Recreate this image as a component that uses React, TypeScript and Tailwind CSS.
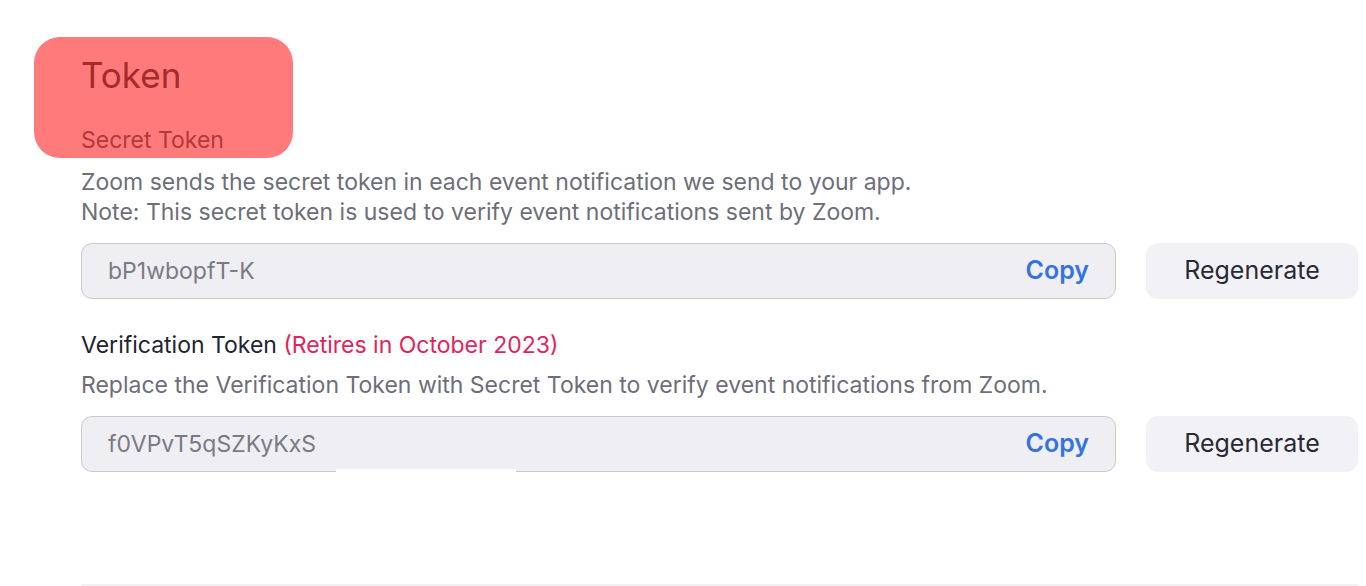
import React from "react";

interface TokenFieldProps {
  value: string;
  masked?: boolean;
}

const TokenField: React.FC<TokenFieldProps> = ({ value, masked }) => {
  return (
    <div className="flex items-center gap-[30px]">
      <div className="relative flex h-[56px] flex-1 items-center justify-between rounded-[11px] border border-[#c9c9d2] bg-[#eeeef3] pl-[26px] pr-[26px]">
        <span className="text-[23px] text-[#7a7a85]">{value}</span>
        <span className="text-[25px] font-semibold text-[#3572e2]">Copy</span>
        {masked && (
          <div className="absolute bottom-[-2px] left-[254px] h-[4px] w-[180px] bg-white" />
        )}
      </div>
      <button className="flex h-[56px] w-[212px] items-center justify-center rounded-[12px] bg-[#f2f2f6] text-[25px] text-[#2a2a36]">
        Regenerate
      </button>
    </div>
  );
};

export default function App() {
  return (
    <div
      className="h-[586px] w-[1366px] overflow-hidden bg-white"
      style={{ fontFamily: "Inter, 'Noto Sans', sans-serif" }}
    >
      <div className="relative pl-[81px] pr-[8px] pt-[54px]">
        {/* highlight over the heading */}
        <div className="absolute left-[34px] top-[37px] h-[121px] w-[259px] rounded-[26px] bg-[#ff7b7b]" />

        <div className="relative">
          <h1 className="text-[35px] leading-[42px] text-[#a52a2a]">Token</h1>
          <p className="mt-[29px] text-[23px] leading-[30px] text-[#b3383a]">Secret Token</p>
        </div>

        <div className="mt-[12px] text-[23px] leading-[30px] text-[#6e6e7a]">
          <p>Zoom sends the secret token in each event notification we send to your app.</p>
          <p>Note: This secret token is used to verify event notifications sent by Zoom.</p>
        </div>

        <div className="mt-[16px]">
          <TokenField value="bP1wbopfT-K" />
        </div>

        <p className="mt-[31px] text-[23px] leading-[30px] text-[#232333]">
          Verification Token <span className="text-[#e0245e]">(Retires in October 2023)</span>
        </p>
        <p className="mt-[10px] text-[23px] leading-[30px] text-[#6e6e7a]">
          Replace the Verification Token with Secret Token to verify event notifications from Zoom.
        </p>

        <div className="mt-[16px]">
          <TokenField value="f0VPvT5qSZKyKxS" masked />
        </div>

        <div className="mt-[112px] h-[2px] bg-[#f1f1f1]" />
      </div>
    </div>
  );
}
